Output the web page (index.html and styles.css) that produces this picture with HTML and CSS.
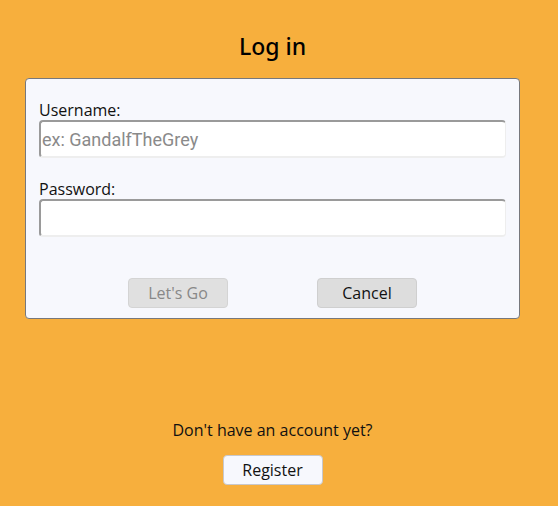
FILE: index.html
```html
<!DOCTYPE html>
<html>
<head>
<meta charset="utf-8">
<link rel="stylesheet" href="styles.css">
</head>
<body>
<div class="page">
  <h1 class="title">Log in</h1>
  <form class="card">
    <label class="label">Username:</label>
    <input class="field" type="text" placeholder="ex: GandalfTheGrey">
    <label class="label label-gap">Password:</label>
    <input class="field" type="password">
    <div class="actions">
      <button type="button" class="btn" disabled>Let's Go</button>
      <button type="button" class="btn">Cancel</button>
    </div>
  </form>
  <div class="signup">
    <p class="signup-text">Don't have an account yet?</p>
    <button type="button" class="btn btn-light">Register</button>
  </div>
</div>
</body>
</html>
```
FILE: styles.css
```css
html, body {
  margin: 0;
  padding: 0;
  background: #f7af3d;
  height: 100%;
}
body {
  font-family: "Open Sans", "Noto Sans", sans-serif;
  color: #111;
}
.page {
  width: 495px;
  margin-left: 25px;
  display: flex;
  flex-direction: column;
}
.title {
  margin: 31px 0 17px;
  font-family: "Noto Sans", "Open Sans", sans-serif;
  font-size: 23px;
  line-height: 30px;
  font-weight: 500;
  text-align: center;
  color: #000;
}
.card {
  background: #f7f8fd;
  border: 1px solid #77787c;
  border-radius: 4px;
  padding: 21px 13px 10px;
  display: flex;
  flex-direction: column;
}
.label {
  font-size: 16px;
  line-height: 20px;
  height: 20px;
}
.label-gap {
  margin-top: 21px;
}
.field {
  box-sizing: border-box;
  width: 467px;
  height: 38px;
  margin: 0;
  padding: 0 0 0 1px;
  background: #fff;
  border-style: solid;
  border-width: 2px 1px 2px 2px;
  border-color: #9a9a9a #eeeeee #eeeeee #9a9a9a;
  border-radius: 4px;
  font-family: Roboto, "Liberation Sans", sans-serif;
  font-size: 18px;
  color: #111;
  outline: none;
}
.field::placeholder {
  color: #8a8a8a;
}
.actions {
  margin-top: 41px;
  display: flex;
  justify-content: center;
  gap: 89px;
}
.btn {
  box-sizing: border-box;
  width: 100px;
  height: 30px;
  padding: 0;
  background: #dddddd;
  border: 1px solid #cfcfcf;
  border-radius: 4px;
  font-family: "Open Sans", "Noto Sans", sans-serif;
  font-size: 16px;
  color: #111;
}
.btn:disabled {
  background: #e0e0e0;
  border-color: #d4d4d4;
  color: #888;
}
.signup {
  margin-top: 100px;
  display: flex;
  flex-direction: column;
  align-items: center;
}
.signup-text {
  margin: 0 0 14px;
  font-size: 16px;
  line-height: 22px;
}
.btn-light {
  background: #f7f8fd;
  border-color: #c8c8cc;
}
```
